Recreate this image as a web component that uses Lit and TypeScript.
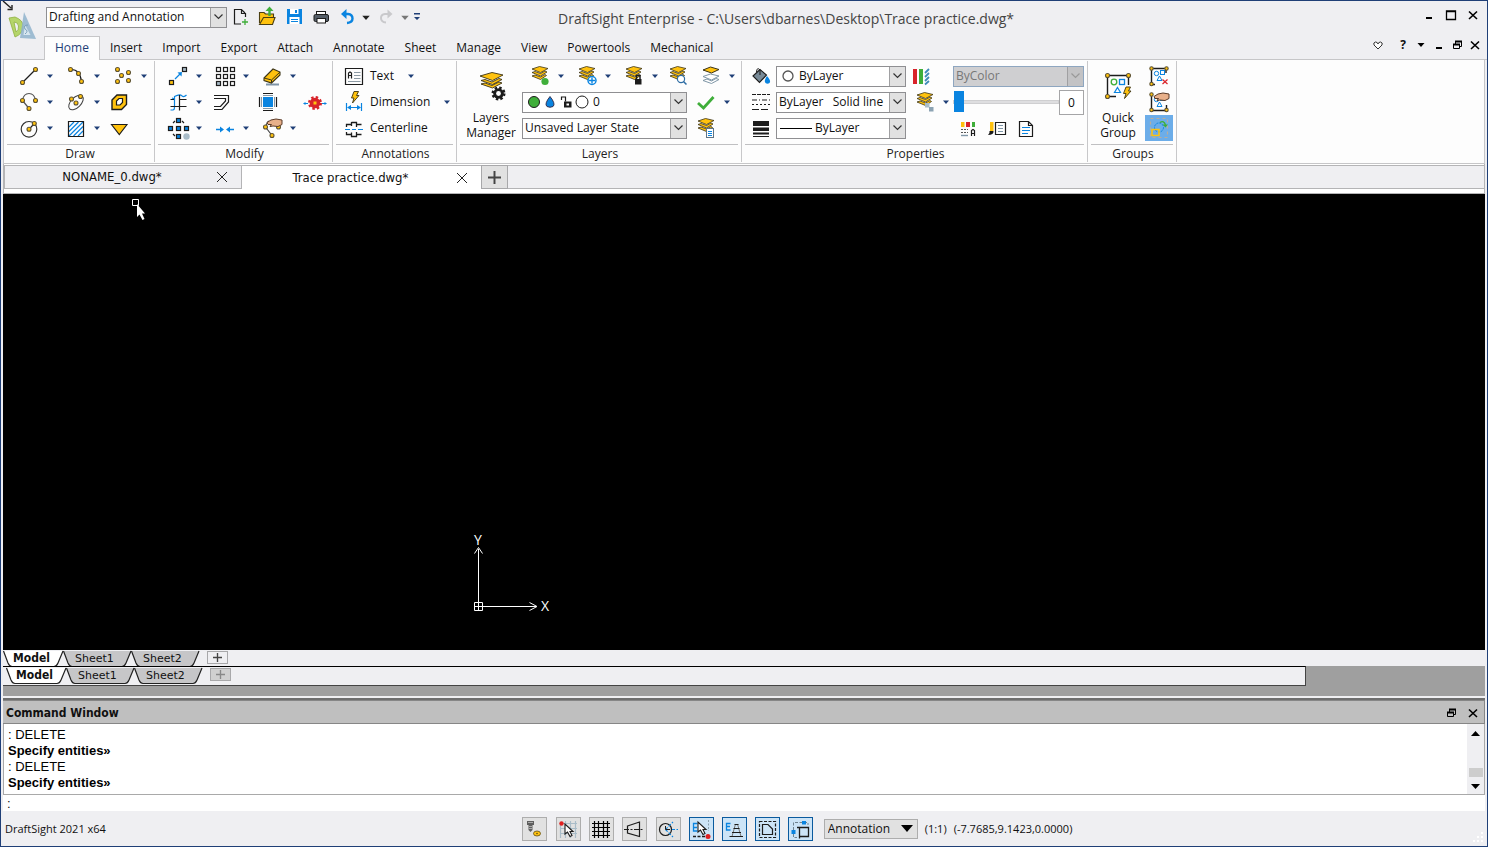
import { LitElement, html, css, svg, nothing } from "lit";
import { customElement } from "lit/decorators.js";
import { classMap } from "lit/directives/class-map.js";

const Y = "#ffc20e";
const K = "#1c1c1c";
const B = "#0a84e0";
const G = "#3fae3a";
const GR = "#a9bcc8";

const dot = (x: number, y: number, r = 2) =>
  svg`<circle cx=${x} cy=${y} r=${r} fill=${Y} stroke="#5e5334" stroke-width="1.1"/>`;
const box = (x: number, y: number, fill = "none", stroke = K, s = 4) =>
  svg`<rect x=${x - s / 2} y=${y - s / 2} width=${s} height=${s} fill=${fill} stroke=${stroke} stroke-width="1.2"/>`;
const stroke = (d: string, c = K, w = 1.2, fill = "none", dash = "") =>
  svg`<path d=${d} fill=${fill} stroke=${c} stroke-width=${w} stroke-dasharray=${dash || "none"}/>`;
const fill = (d: string, c = K) => svg`<path d=${d} fill=${c}/>`;
const stack = () => svg`
  <path d="M4 12 L7 11 L12.500 13 L17 10.500 L18.500 11.500 L12.500 15.500 Z" fill=${Y} stroke="#3a3216" stroke-width="0.8"/>
  <path d="M4 8.500 L7 7.500 L12.500 9.500 L17 7 L19 8 L12.500 12 Z" fill=${Y} stroke="#3a3216" stroke-width="0.8"/>
  <path d="M4 5 L11.500 2.500 L20 4.500 L12.500 8.500 Z" fill=${Y} stroke="#3a3216" stroke-width="0.8"/>`;
const gear = (cx: number, cy: number, r: number, c: string) => svg`
  <circle cx=${cx} cy=${cy} r=${r - 1.2} fill=${c}/>
  <circle cx=${cx} cy=${cy} r=${r - 0.8} fill="none" stroke=${c} stroke-width="2.6"
    stroke-dasharray=${`${(r - 0.8) * 0.42} ${(r - 0.8) * 0.3654}`}/>`;
const hand = (x: number, y: number) => svg`
  <path transform=${`translate(${x} ${y})`} d="M0 3.5 L4 1 L9 0 L15 1 V5.5 L11 7.5 L6 7 L3 7.5 L4.5 5.5 L1 5.5 Z" fill="#e8b08a" stroke="#5b3b28" stroke-width="1"/>`;
const cursor = (x: number, y: number) => svg`
  <path transform=${`translate(${x} ${y})`} d="M0 0 V10 L2.5 8 L5 12.5 L7 11.5 L5 7.5 H8 Z" fill="#fff" stroke=${K} stroke-width="1.1"/>`;
const bolt = (x: number, y: number) => svg`
  <path transform=${`translate(${x} ${y})`} d="M3 0 H7.5 L5.5 4 H8 L1.5 11.5 L3 6.5 H0.5 Z" fill=${Y} stroke="#3c3311" stroke-width="0.9"/>`;
const shapes = () => svg`
  <circle cx="9.5" cy="9.5" r="2.2" fill="none" stroke=${B}/>
  <rect x="13.5" y="6.5" width="4" height="4" fill="none" stroke=${B}/>
  <path d="M12.5 12 L15 16.5 H10 Z" fill="none" stroke=${B}/>`;

const ICONS: Record<string, unknown> = {
  line: [stroke("M5.5 18.5 L18.5 5.5"), dot(5.5, 18.5), dot(18.5, 5.5)],
  arc: [stroke("M6.5 5.5 Q16 5 17.5 17.5"), dot(6.5, 5.5), dot(14.5, 9.5), dot(17.5, 17.5)],
  points: [dot(6.5, 5.5), dot(17.5, 8.5), dot(10.5, 11.5), dot(6.5, 17.5), dot(17.5, 16.5)],
  polyarc: [stroke("M12 18.5 L5.5 10.5 Q6.5 3.5 12 3.5 T18.5 10.5", "#555"), dot(5.5, 10.5), dot(18.5, 10.5), dot(12, 18.5)],
  ellipse: [
    svg`<ellipse cx="12" cy="12.5" rx="9" ry="5" transform="rotate(-45 12 12.5)" fill="none" stroke="#444"/>`,
    dot(7.5, 9), dot(16.5, 6.5), dot(12, 13),
  ],
  region: [
    stroke("M1 10 L6 5 H15.5 V14.5 L10.5 19.5 H1 Z", K, 1.4, Y),
    stroke("M5.5 15 V11 L8 8.5 H11.5 V12.5 L9 15 Z", K, 1.2, "#fff"),
  ],
  circle: [svg`<circle cx="12" cy="13.3" r="7.8" fill="none" stroke="#333" stroke-width="1.2"/>`, stroke("M12 13.3 L17.3 7.5"), dot(12, 13.3), dot(17.3, 7.5)],
  hatch: [
    stroke("M5 11 L10 6 M5 15.5 L14.5 6 M5 20 L19 6 M9.5 20 L19 10.5 M14 20 L19 15", B),
    stroke("M4.5 5.5 H19.5 V20.5 H4.5 Z"),
  ],
  solid: stroke("M0.5 8.5 H16 L8.3 18.5 Z", K, 1.1, Y),
  move: [box(5.5, 18.5, Y), box(18.5, 5.5, GR), stroke("M9 15 L14 10", B), fill("M11.5 8.5 L16 8 L15.5 12.5 Z", B)],
  array: [5.5, 12.5, 19.5].map((y) => [5.5, 12.5, 19.5].map((x) => box(x, y, x < 8 && y > 15 ? GR : "none"))),
  erase: [
    stroke("M6 20.5 H19", "#7f95a8", 2),
    stroke("M4 14 L13 5 L20 8 L20 11 L11.5 19 L4 16.5 Z", "#3d3517", 1.1, Y),
    stroke("M4 14 L11.5 16 L20 8 M11.5 16 V19", "#3d3517", 1),
  ],
  trim: [
    stroke("M4.5 20 H7 Q8.5 20 8.5 17 V9 L6 8 M8.5 12 V6.5 Q14 3.500 16 6 Q18 7.500 20.5 5", B, 1.2),
    stroke("M4.5 9.5 H8 M13 9.5 H20.5 M4.5 16.5 H20.5 M13.5 5 V20.5"),
  ],
  offset: [stroke("M1 5.5 H15.5 V12 L9 19.5 H1"), stroke("M1 8.5 H12.500 V11 L7.5 16.5 H1")],
  scale: [
    svg`<rect x="3" y="7" width="10" height="10" fill=${B}/>`,
    stroke("M3 5.5 H13 M3 18.5 H13 M1.5 7 V17 M14.5 7 V17", "#8698a5", 1),
    stroke("M3 3.5 H13 M3 20.5 H13 M-0.5 7 V17 M16.5 7 V17", K, 1.2),
  ],
  explode: [gear(12, 13, 6.5, "#d8232a"), svg`<rect x="10.5" y="11.5" width="3" height="3" fill=${Y}/>`, stroke("M1 13.5 H5 M19 13.5 H23", B), fill("M0 13.5 L2.500 12 V15 Z M24 13.5 L21.500 12 V15 Z", B)],
  ring: [
    stroke("M7 7 L9 5 M16 5 L18 7 M7 18 L9 20", K),
    [[12.5, 4.5], [4.5, 12.5], [12.5, 12.5], [20.5, 12.5], [12.5, 20.5]].map(([x, y]) => box(x, y, B)),
    svg`<circle cx="20.5" cy="20.5" r="3.2" fill=${GR}/>`,
  ],
  join: [stroke("M3 13.5 H8 M16 13.5 H21", B, 1.4), fill("M7 10.5 L11 13.5 L7 16.5 Z M17 10.5 L13 13.5 L17 16.5 Z", B)],
  editpoly: [stroke("M5.5 11 L12 19.5 M5.5 11 Q7 6 9 5", "#444"), dot(18.5, 11), hand(7, 3), dot(5.5, 11), dot(12, 19.5)],
  text: [
    stroke("M3.5 4.5 H20.5 V20.5 H3.5 Z"),
    stroke("M6.5 14.5 V9 L8 8 L9.5 9 V14.5 M6.5 11.5 H9.5"),
    stroke("M12 8.5 H18.5 M12 11.5 H18.5 M12 14.5 H18.5 M6 17.5 H18.5", "#8c9aa4", 1),
  ],
  dimension: [bolt(9, 1.5), stroke("M4.5 13 V21 M19.5 13 V21 M6 17.5 H18", B), fill("M5 17.5 L9 15 V20 Z M19 17.5 L15 15 V20 Z", B)],
  centerline: [
    stroke("M19.5 8.5 H14 M14.5 11 V6.5 H9.5 M9.5 10 V8.5 H4.5 V11 M9.5 6 V10 M19.5 18.5 H14.5 M14.5 16 V20.5 H9.5 V16.5 M9.5 18.5 H4.5 V16", K, 1.3),
    stroke("M3 13.5 H8 M10 13.5 H14 M16 13.5 H21", B),
  ],
  layerOn: [stack(), svg`<circle cx="17" cy="17.5" r="3.6" fill=${G}/>`],
  layerFreeze: [stack(), svg`<circle cx="17" cy="16.5" r="4" fill="#fff" stroke=${B} stroke-width="1.5"/>`, stroke("M17 13.5 V19.5 M14 16.5 H20", B, 1.4)],
  layerLock: [stack(), svg`<rect x="13" y="15" width="6.5" height="5.5" fill=${K}/>`, stroke("M14.5 15 V11.5 H18 V15", K, 1.5)],
  layerPreview: [stack(), svg`<circle cx="15" cy="15" r="3.6" fill="#fff" stroke="#2e6da4" stroke-width="1.2"/>`, stroke("M17.5 17.5 L20.5 20.5", "#2e6da4", 1.5)],
  layerIsolate: [
    stroke("M4 16.5 L8 15 L12.500 17 L17 14.500 L20 15.5 L12.500 19.5 Z", "#7f96a6", 1, "#fff"),
    stroke("M4 12.500 L11.500 10 L20 12 L12.500 16 Z", "#7f96a6", 1, "#fff"),
    stroke("M4 6 L11.500 3 L20 5.5 L12.500 9 Z", "#3a3216", 1, Y),
  ],
  check: svg`<path d="M4 13 L9.5 18 L19.5 7" fill="none" stroke=${G} stroke-width="2.8"/>`,
  layerState: [stack(), svg`<rect x="12.5" y="12.5" width="7" height="9" fill="#fff" stroke="#5f7486"/>`, stroke("M14 15.5 H18 M14 17.5 H18 M14 19.5 H18", B, 1)],
  paint: [
    stroke("M4 12 L11 5.5 L17.5 11 L10.5 18.5 Z", K, 1.1, "#788a97"),
    stroke("M11 11 V6 Q8 2.5 7.5 8", K, 1),
    fill("M18 12 Q22.5 17 20.5 19 Q18.5 20.5 16.5 19 Q14.5 17 18 12 Z", B),
  ],
  linestyle: [
    stroke("M3 4.5 H21", K, 1.2, "none", "4 1"), stroke("M3 10 H21", K, 1.2, "none", "5 2 1 2"),
    stroke("M3 14.5 H21", K, 1.2, "none", "2 2"), stroke("M3 19.5 H21", K, 1.2, "none", "7 2"),
  ],
  lineweight: svg`<rect x="4" y="5" width="16" height="5" fill=${K}/><rect x="4" y="11.5" width="16" height="3.5" fill=${K}/><rect x="4" y="16.5" width="16" height="2" fill=${K}/><rect x="4" y="20" width="16" height="1" fill=${K}/>`,
  colors: svg`<rect x="0" y="5" width="4" height="15" fill="#d8232a"/><rect x="6" y="5" width="4" height="15" fill=${G}/><path d="M12 9 L16 5 M12 13 L16 9 M12 17 L16 13 M12 20.5 L16 17" stroke="#3f8ab8" stroke-width="1.8"/>`,
  layerCopy: [stack(), svg`<rect x="12" y="13" width="4.5" height="4.5" fill=${GR}/><rect x="16" y="17" width="4.5" height="4.5" fill="#8ca3b3"/>`],
  palette: [
    svg`<rect x="5" y="6" width="3.5" height="5" fill=${Y}/><rect x="10" y="6" width="4" height="5" fill="#d8232a"/><rect x="16" y="6" width="3" height="5" fill=${G}/>`,
    stroke("M5 13.5 H12 M5 16.5 H12", "#555", 1, "none", "2 1"), stroke("M5 19.5 H12", "#7f96a6", 1.4),
    stroke("M15.5 20 V14.5 L17 13.5 L18.5 14.5 V20 M15.5 17.5 H18.5"),
  ],
  brush: [
    stroke("M10.5 6.5 H20.5 V18.5 H10.5 Z", K, 1.2, "#fff"), stroke("M13 9.5 H18 M13 12.5 H18 M13 15.5 H18", "#7f96a6", 1),
    svg`<rect x="5" y="6" width="3.5" height="9" fill=${Y}/>`, fill("M4.5 15 H8.5 Q9 19 3 19 Q5 17.5 4.5 15 Z"),
  ],
  sheet: [stroke("M5.5 5.5 H14.5 L18.5 9.5 V20.5 H5.5 Z M14.5 5.5 V9.5 H18.5"), stroke("M8 11.5 H16 M8 14.5 H16 M8 17.5 H14", B)],
  groupRemove: [
    stroke("M4.5 20 V4.5 H19 V9 M8 20.5 H4.5", K, 1.4), shapes(), dot(4.5, 4.5, 1.7), dot(19.5, 4.5, 1.7), dot(4.5, 20, 1.7),
    stroke("M15.5 15.5 L20.5 20 M20.5 15.5 L15.5 20", "#d8232a"),
  ],
  groupEdit: [
    stroke("M4.5 5 V20.5 H19.5 V15", K, 1.4), shapes(), hand(7, 3), dot(4.5, 4.5, 1.7), dot(4.5, 20, 1.7), dot(19.5, 20, 1.7),
  ],
  groupSelect: [
    stroke("M3.5 2.5 H20.5 V21.5 H3.5 Z", "#b8ad9d", 1.2, "none", "3 3"),
    svg`<circle cx="12" cy="11.5" r="4.5" fill="none" stroke=${B} stroke-dasharray="2 1"/>`,
    stroke("M5 13.5 H12 V19.5 H5 Z", Y, 1.6), stroke("M13 6.500 Q17 4 18.5 9", G, 1.4), fill("M15.500 8.500 H21 L18.500 11.500 Z", G),
  ],
  newdoc: [stroke("M6.5 4.5 H13.5 L17 8 M13.5 4.5 V8.5 H17.5 V12 M6.5 4 V19 H13"), stroke("M17 14 V20 M14 17 H20", G, 1.3)],
  open: [
    stroke("M4.5 18 V7.5 H9 L10.5 9 H18.5 V12", "#4b3f12", 1.1, Y), stroke("M4.5 19.5 L8.5 12.5 H20 L17.5 19.5 Z", "#4b3f12", 1.1, Y),
    stroke("M14.5 11 V5", G, 2.4), fill("M10.5 6 L14.5 1.5 L18.5 6 Z", G),
  ],
  save: [
    svg`<rect x="5" y="4" width="15" height="15" fill=${B}/><rect x="8" y="4" width="8.500" height="5" fill="#fff"/><rect x="13" y="5" width="2" height="3" fill=${B}/><rect x="7.500" y="12" width="10" height="7" fill="#fff"/>`,
    stroke("M9 14.5 H16 M9 16.5 H16", B, 1),
  ],
  print: [
    svg`<rect x="7.500" y="6.500" width="9" height="4" fill="#fff" stroke=${K}/><rect x="5" y="9.500" width="14.500" height="7" rx="1.500" fill="#555e68" stroke=${K}/><rect x="8" y="13.500" width="8.500" height="4.500" fill="#fff" stroke=${K}/>`,
  ],
  undo: [stroke("M8 9 H12 Q16.5 9.500 16.5 13.500 Q16.5 17.5 11 18", B, 2.4), fill("M5 9 L10.5 4 V14 Z", B)],
  redo: [stroke("M14 9 H10 Q6 9.500 6 13 Q6 17 11 17.5", "#c9c9cc", 2), fill("M17.5 9 L12.5 4.5 V13.500 Z", "#c9c9cc")],
  screw: [
    fill("M5 4 H12 V8 H10.500 V13 L8.500 15 L6.500 13 V8 H5 Z", "#5e5e5e"), stroke("M6 5.500 H11 M7 9.500 H10 M7 11.500 H10", "#a9a9a9", 1),
    svg`<ellipse cx="15" cy="16.500" rx="3.500" ry="2.500" fill=${Y} stroke="#5e4b12" stroke-width="0.800"/><circle cx="15" cy="16.500" r="0.800" fill="#5e4b12"/>`,
  ],
  snap: [stroke("M4.5 6 V21 M9.5 4 V21 M14.5 4 V21 M19.5 4 V21 M4 6.5 H21 M4 11.5 H21 M4 16.5 H21", GR, 1.2), svg`<circle cx="5.500" cy="6.500" r="2.200" fill="#e02020"/>`, cursor(9, 7)],
  grid: stroke("M5.5 4 V21 M9.500 4 V21 M14.500 4 V21 M18.500 4 V21 M3 6.5 H21 M3 10.5 H21 M3 14.500 H21 M3 18.500 H21", "#000", 1.2),
  ortho: [stroke("M5.500 9 L17.500 5 V19.500 L5.500 16 Z"), stroke("M2 12.500 H22", K, 1.2, "none", "5 1.500 2 1.500")],
  polar: [svg`<circle cx="9.500" cy="12.500" r="6" fill="none" stroke=${K} stroke-width="1.200"/>`, stroke("M9.500 12.500 L17 5 M9.500 12.500 L17 20 M16 12.500 H22", B, 1.1, "none", "3 1.500"), stroke("M9.500 9 V12.500 H14", K, 1)],
  esnap: [
    stroke("M8.500 6.500 H4.500 V14 H8.500 M4.500 10.500 H8", B, 1.3), stroke("M19.500 3 V14", "#8aa0ae", 1, "none", "2 1.500"),
    stroke("M4 19.500 H16", K, 1.3, "none", "3 1.500"), cursor(9, 5), svg`<circle cx="19" cy="19.500" r="2.500" fill="#e02020"/>`,
  ],
  etrack: [stroke("M8.500 6.500 H4.500 V13 H8.500 M4.500 9.500 H8", B, 1.3), stroke("M13.500 7 L10 19.500 M15.500 7 L19 19.500", "#777", 1), stroke("M12.500 7.500 H16.500 M11.500 11.500 H17.500 M10 15.500 H19 M7.500 19.500 H21", K, 1.2)],
  qinput: [stroke("M4.500 4.500 H20.500 V20.500 H4.500 Z", K, 1.2, "none", "3 1.500"), stroke("M7.500 7.500 H13 L17.500 12 V17.500 H7.500 Z")],
  transform: [
    stroke("M5.500 13 V5.500 H20 V8 M5.500 17 V20.500 H9", "#6e8290", 1, "none", "3 1.500"), stroke("M11.500 10.500 H20.500 V19.500 H11.500 Z M11.500 10.500 V21.500 M9 10.500 H20", K, 1.3),
    svg`<rect x="14" y="4" width="4" height="3.500" fill=${B}/><rect x="3.500" y="13" width="4" height="4" fill=${B}/>`,
  ],
};

const icon = (name: string) =>
  html`<svg class="icon" viewBox="0 0 24 24" aria-hidden="true">${ICONS[name]}</svg>`;
const more = (label: string, cls = "") =>
  html`<button class="more ${cls}" aria-label="${label} options"><svg width="6" height="4" viewBox="0 0 6 4"><path d="M0 0.500 H6 L3 4 Z"/></svg></button>`;
const tool = (name: string, label: string, drop = false, cls = "") =>
  html`<span class="tool"><button class="ib" aria-label=${label}>${icon(name)}</button>${drop ? more(label, cls) : nothing}</span>`;
const chevron = html`<span class="chev"><svg width="9" height="6" viewBox="0 0 9 6"><path d="M0.500 0.500 L4.500 4.500 L8.500 0.500" fill="none" stroke="currentColor" stroke-width="1.200"/></svg></span>`;
const combo = (label: string, value: string, cls = "", art: unknown = nothing, disabled = false) =>
  html`<span class="combo ${cls}"><select aria-label=${label} ?disabled=${disabled}><option>${value}</option></select>${art}${chevron}</span>`;
const glyph = (label: string, w: number, d: unknown) =>
  html`<button class="glyph" aria-label=${label}><svg width=${w} height="12" viewBox="0 0 ${w} 12">${d}</svg></button>`;
const closeGlyph = svg`<path d="M2 2.500 L10 10 M10 2.500 L2 10" stroke="#000" stroke-width="1.600"/>`;
const restoreGlyph = svg`<path d="M2.500 5.500 H8.500 V9.500 H2.500 Z M4.500 5 V2.500 H10.500 V7.500 H9" fill="none" stroke="#000"/><path d="M2 5.500 H9 M4 2.500 H11" stroke="#000" stroke-width="2"/>`;
const crossGlyph = html`<svg width="12" height="12" viewBox="0 0 12 12"><path d="M1 1 L11 11 M11 1 L1 11" stroke="#222"/></svg>`;

const MENUS = ["Home", "Insert", "Import", "Export", "Attach", "Annotate", "Sheet", "Manage", "View", "Powertools", "Mechanical"];
const SHEETS = ["Model", "Sheet1", "Sheet2"];
const STATUS: [string, string, boolean][][] = [
  [["screw", "Hardware", false]],
  [["snap", "Snap", false], ["grid", "Grid", false], ["ortho", "Ortho", false]],
  [["polar", "Polar", false], ["esnap", "ESnap", true], ["etrack", "ETrack", true], ["qinput", "QInput", true], ["transform", "Transform", true]],
];

@customElement("app-root")
export class AppRoot extends LitElement {
  static styles = css`
    :host {
      display: flex;
      flex-direction: column;
      box-sizing: border-box;
      height: 100vh;
      min-height: 500px;
      padding: 0 2px;
      overflow: hidden;
      border: 1px solid #1f3f77;
      background: #efeff2;
      color: #111;
      font: 12px/16px "Open Sans", "Noto Sans", sans-serif;
    }
    * { box-sizing: border-box; }
    button, select, input { font: inherit; color: inherit; margin: 0; padding: 0; border: 0; background: none; border-radius: 0; }
    button { display: inline-flex; align-items: center; justify-content: center; flex: none; white-space: nowrap; }
    svg { display: block; flex: none; overflow: visible; }
    .icon { width: 24px; height: 24px; }

    .header { flex: none; display: grid; grid-template-columns: 41px 1fr; grid-template-rows: 34px 24px; border-bottom: 1px solid #c6c6c8; margin: 0 -2px 0 0; }
    .logo { grid-row: 1 / 3; align-self: start; }
    .titlebar { display: flex; align-items: center; padding: 0 3px 2px 2px; min-width: 0; }
    .workspace { width: 181px; margin-right: 1px; }
    .qat { display: flex; gap: 3px; align-items: center; }
    .qat .more { width: 12px; }
    .qat .more svg { width: 8px; height: 5px; fill: #222; }
    .qat .dim svg { fill: #777; }
    .title { flex: 1; padding: 4px 0 0 138px; color: #444; font-size: 14px; line-height: 20px; white-space: nowrap; overflow: hidden; }
    .wins { display: flex; margin-top: -4px; }
    .wins .glyph { width: 22px; height: 24px; }
    .menubar { display: flex; align-items: flex-end; min-width: 0; padding-right: 3px; }
    .menu { display: flex; flex: 1; }
    .menu button { height: 24px; padding: 0 9px 2px; margin-bottom: -1px; border: 1px solid transparent; border-bottom: 0; }
    .menu .on { padding: 0 10px 2px; background: #fdfdfd; border-color: #c6c6c8; color: #1f3f77; }
    .doc { display: flex; padding-bottom: 2px; }
    .doc .glyph { width: 18px; height: 24px; }
    .doc .fav { margin-right: 7px; }

    .ribbon { flex: none; display: flex; background: #fdfdfd; border: 1px solid #c6c6c8; border-top: 0; }
    .group { display: flex; flex-direction: column; flex: none; margin: 1px 0; border-right: 1px solid #c8c8ca; }
    .body { flex: 1; display: flex; padding-top: 2px; margin-bottom: 3px; }
    .caption { margin: 0 3px; padding-left: 2px; border-top: 1px solid #c0c0c2; text-align: center; line-height: 17px; color: #222; }
    .rows { display: grid; grid-auto-rows: 26px; align-items: center; }
    .draw { width: 151px; }
    .draw .rows { padding-left: 13px; grid-template-columns: repeat(3, 47px); }
    .modify { width: 178px; }
    .modify .rows { padding-left: 11px; grid-template-columns: 47px 47px 43px 24px; }
    .annot { width: 124px; }
    .annot .rows { padding-left: 9px; }
    .layers { width: 285px; }
    .props { width: 346px; }
    .props .rows { padding-left: 7px; grid-template-columns: 27px 137px 40px 131px; }
    .groups { width: 89px; }
    .groups .rows { grid-template-columns: 28px; justify-items: center; }
    .groups .ib { width: 28px; height: 26px; }
    .groups .on { background: #6cade9; }
    .tool { display: flex; align-items: center; }
    .ib { height: 24px; }
    .more { width: 18px; height: 24px; }
    .more svg { fill: #1f3f77; }
    .named { gap: 4px; }
    .annot .more { margin-left: 8px; }
    .big { flex-direction: column; justify-content: flex-start; padding-top: 7px; gap: 8px; line-height: 15px; white-space: normal; width: 56px; margin-left: 6px; }
    .groups .big { width: 52px; margin-left: 4px; margin-right: 1px; }
    .stackrows { margin-left: 3px; }
    .strip { display: grid; grid-template-columns: 47px 47px 44px 33px 42px; padding-left: 6px; }
    .line { display: flex; align-items: center; gap: 7px; }
    .icons { display: flex; gap: 5px; padding-left: 3px; }
    .combo { display: grid; height: 21px; border: 1px solid #8f8f92; background: #fff; grid-template-columns: 1fr 16px; align-items: center; }
    .combo select { grid-area: 1 / 1 / 2 / 3; width: 100%; height: 19px; appearance: none; padding: 0 16px 0 2px; opacity: 1; }
    .combo .art { grid-area: 1 / 1; pointer-events: none; }
    .chev { grid-area: 1 / 2; height: 19px; display: flex; align-items: center; justify-content: center; pointer-events: none; background: #e1e1e1; border-left: 1px solid #a0a0a2; color: #333; }
    .w164 { width: 165px; }
    .w129 { width: 130px; }
    .in70 select { padding-left: 70px; }
    .in22 select { padding-left: 22px; }
    .in38 select { padding-left: 38px; }
    .off { background: #cfcfd1; color: #777; border-color: #8ea6c0; width: 131px; }
    .off select { color: #777; }
    .off .chev { background: #c3c3c5; color: #999; }
    .slide { display: flex; align-items: center; }
    .slide input[type="range"] { appearance: none; width: 106px; height: 22px; }
    .slide input[type="range"]::-webkit-slider-runnable-track { height: 4px; background: #dedee0; border: 1px solid #cfcfd1; }
    .slide input[type="range"]::-webkit-slider-thumb { appearance: none; width: 10px; height: 21px; margin-top: -10px; background: #0a84e0; }
    .num { width: 25px; height: 25px; border: 1px solid #a5a5a7; background: #fff; text-align: center; }

    .docs { flex: none; display: flex; height: 30px; padding-top: 1px; background: #fff; border: 1px solid #b4b4b6; border-top: 0; font: 13px/16px "DejaVu Sans Condensed", "DejaVu Sans", sans-serif; }
    .dtab { display: flex; align-items: center; height: 24px; width: 239px; border-top: 1px solid #b4b4b6; }
    .dtab .name { flex: 1; padding-left: 16px; }
    .dtab .x { width: 38px; }
    .idle { width: 238px; background: #efeff2; border: 1px solid #b4b4b6; }
    .plus { width: 27px; height: 24px; background: #e1e1e1; border: 1px solid #a8a8aa; }
    .fill { flex: 1; height: 24px; background: #efeff2; border: 1px solid #b4b4b6; border-width: 1px 0; }

    .canvas { flex: 1; min-height: 0; position: relative; background: #000; }
    .pick { position: absolute; left: 128px; top: 4px; }
    .ucs { position: absolute; left: 465px; bottom: 33px; }
    .ucs text { fill: #fff; font: 14px "Open Sans", sans-serif; }

    .sheets { flex: none; display: flex; height: 16px; font: 11px/17px "DejaVu Sans", sans-serif; }
    .stab { display: grid; grid-template-columns: 100%; justify-content: start; justify-items: start; text-align: left; height: 16px; width: 68px; }
    .stab > * { grid-area: 1 / 1; }
    .stab span { padding-left: 12px; }
    .stab .sel { font-family: "DejaVu Sans Condensed", sans-serif; font-weight: bold; font-size: 12px; padding-left: 10px; }
    .stab svg { width: 100%; height: 16px; }
    .stab.first { width: 60px; }
    .splus { width: 21px; height: 13px; margin: 1px 0 0 8px; border: 1px solid #a8a8aa; background: #efeff2; }
    .ghost .splus { background: #d0d0d0; color: #888; }
    .dock { flex: none; height: 30px; background: #9f9f9f; }
    .ghost { height: 20px; margin-right: 179px; padding-left: 3px; background: #efeff2; border: 1px solid #444; border-top-color: #000; border-left: 0; }

    .cmd { flex: none; margin-top: 2px; border-top: 2px solid #6e6e6e; }
    .cmdbar { display: flex; align-items: center; height: 24px; padding: 1px 0 0 3px; background: #bfbfbf; border: 1px solid #868686; border-left: 0; font: bold 12px/16px "DejaVu Sans Condensed", "DejaVu Sans", sans-serif; }
    .cmdbar .label { flex: 1; }
    .cmdbar .glyph { width: 22px; }
    .log { display: flex; height: 71px; border: 1px solid #a9a9a9; border-top: 0; background: #fff; font: 13px/16px "Liberation Sans", sans-serif; color: #000; }
    .lines { flex: 1; padding: 3px 4px 0; overflow: hidden; }
    .lines p { margin: 0; }
    .lines .b { font-weight: bold; }
    .scroll { width: 17px; background: #efeff2; display: flex; flex-direction: column; align-items: center; padding: 7px 0 5px; }
    .scroll .thumb { width: 14px; height: 9px; margin-top: auto; margin-bottom: 7px; background: #cdcdcd; }
    .entry { flex: none; width: 100%; height: 16px; padding: 1px 4px 0; background: #fff; font: 13px/15px "Liberation Sans", sans-serif; }

    .status { flex: none; display: flex; align-items: center; height: 35px; font-size: 11px; }
    .version { flex: 0 0 35%; padding-left: 2px; }
    .toggles { display: flex; gap: 9px; margin-right: 11px; }
    .set { display: flex; gap: 8px; }
    .toggle { width: 25px; height: 24px; border: 1px solid #adadad; background: #e1e1e1; }
    .toggle.on { border-color: #0a5a9e; background: #cce4f7; }
    .scale { display: grid; width: 94px; height: 20px; border: 1px solid #adadad; background: #e1e1e1; align-items: center; }
    .scale > * { grid-area: 1 / 1; }
    .scale select { appearance: none; width: 100%; height: 18px; padding-left: 3px; font-size: 12px; }
    .scale svg { justify-self: end; margin-right: 4px; pointer-events: none; }
    .status p { margin: 0 0 0 7px; }
    .grip { margin-left: auto; align-self: flex-end; margin-bottom: 3px; }
  `;

  private sheetTabs() {
    return SHEETS.map((name, i) => {
      const w = i ? 68 : 60;
      const shade = i ? "#c6c6c8" : "#fff";
      return html`<button class=${classMap({ stab: true, first: !i })}>
        <svg viewBox="0 0 ${w} 16"><path d="M0.500 0 L5 12 Q6.500 15.500 9 15.500 H${w - 9} Q${w - 6.5} 15.500 ${w - 5} 12 L${w} 0" fill=${shade} stroke="#222" stroke-width="1.200"/></svg>
        <span class=${i ? "" : "sel"}>${name}</span>
      </button>`;
    });
  }

  private plusGlyph(c: string, s: number) {
    return html`<svg width=${s} height=${s} viewBox="0 0 12 12"><path d="M6 0 V12 M0 6 H12" stroke=${c} stroke-width="1.800"/></svg>`;
  }

  render() {
    return html`
      <header class="header">
        <svg class="logo" width="38" height="46" viewBox="0 0 38 46" aria-label="DraftSight">
          <path d="M0 0 L8 7 M4.500 8.500 H9 V4" fill="none" stroke="#222" stroke-width="1.400"/>
          <path d="M6 17 L12 16 Q20 19 20 25 Q20 33 12 36 Z M11 21 L13 31 Q16 29 15.500 25 Q15 21 11 21 Z" fill="#b5d56a" stroke="#8fb040" stroke-width="0.800" fill-rule="evenodd"/>
          <path d="M21 11 L33 38 L17 37 Z" fill="#8fb3cc" opacity="0.850"/>
          <path d="M22 24 L27.500 34 L20.500 34 Z" fill="#d7e6ef"/>
          <path d="M25 24 Q20 24 22 28 Q26 30 22 33" fill="none" stroke="#7aa0bb"/>
        </svg>
        <div class="titlebar">
          ${combo("Workspace", "Drafting and Annotation", "workspace")}
          <div class="qat">
            ${tool("newdoc", "New")}${tool("open", "Open")}${tool("save", "Save")}${tool("print", "Print")}
            ${tool("undo", "Undo", true)}${tool("redo", "Redo", true, "dim")}
            <button class="glyph" aria-label="Customize"><svg width="6" height="8" viewBox="0 0 6 8" fill="#1f3f77"><path d="M0 0 H6 V1.500 H0 Z M0 4 H6 L3 7 Z"/></svg></button>
          </div>
          <div class="title">DraftSight Enterprise - C:\\Users\\dbarnes\\Desktop\\Trace practice.dwg*</div>
          <div class="wins">
            ${glyph("Minimize", 12, svg`<path d="M3 9 H9" stroke="#000" stroke-width="2"/>`)}
            ${glyph("Maximize", 12, svg`<path d="M1.500 2 H10.500 V10.500 H1.500 Z M1 2.500 H11" fill="none" stroke="#000" stroke-width="1.300"/>`)}
            ${glyph("Close", 12, closeGlyph)}
          </div>
        </div>
        <div class="menubar">
          <nav class="menu">${MENUS.map((m, i) => html`<button class=${i ? "" : "on"}>${m}</button>`)}</nav>
          <div class="doc">
            <button class="glyph fav" aria-label="Favorites"><svg width="10" height="9" viewBox="0 0 10 9"><path d="M5 8 L1 4 Q0 1.500 2.500 1 Q4.500 1 5 3 Q5.500 1 7.500 1 Q10 1.500 9 4 Z" fill="#fff" stroke="#333"/></svg></button>
            <button class="glyph" aria-label="Help"><b>?</b></button>
            ${glyph("Help options", 8, svg`<path d="M0.500 4 H7.500 L4 8 Z"/>`)}
            ${glyph("Minimize drawing", 12, svg`<path d="M3 9 H9" stroke="#000" stroke-width="2"/>`)}
            ${glyph("Restore drawing", 12, restoreGlyph)}
            ${glyph("Close drawing", 12, closeGlyph)}
          </div>
        </div>
      </header>

      <section class="ribbon">
        <div class="group draw">
          <div class="body"><div class="rows">
            ${tool("line", "Line", true)}${tool("arc", "Arc", true)}${tool("points", "Point", true)}
            ${tool("polyarc", "Polyline", true)}${tool("ellipse", "Ellipse", true)}${tool("region", "Region")}
            ${tool("circle", "Circle", true)}${tool("hatch", "Hatch", true)}${tool("solid", "Solid")}
          </div></div>
          <div class="caption">Draw</div>
        </div>
        <div class="group modify">
          <div class="body"><div class="rows">
            ${tool("move", "Move", true)}${tool("array", "Pattern", true)}${tool("erase", "Delete", true)}<span></span>
            ${tool("trim", "Trim", true)}${tool("offset", "Offset")}${tool("scale", "Scale")}${tool("explode", "Explode")}
            ${tool("ring", "Circular pattern", true)}${tool("join", "Join", true)}${tool("editpoly", "Edit polyline", true)}<span></span>
          </div></div>
          <div class="caption">Modify</div>
        </div>
        <div class="group annot">
          <div class="body"><div class="rows">
            <span class="tool"><button class="named">${icon("text")}Text</button>${more("Text")}</span>
            <span class="tool"><button class="named">${icon("dimension")}Dimension</button>${more("Dimension")}</span>
            <span class="tool"><button class="named">${icon("centerline")}Centerline</button></span>
          </div></div>
          <div class="caption">Annotations</div>
        </div>
        <div class="group layers">
          <div class="body">
            <button class="big">
              <svg width="32" height="32" viewBox="0 0 32 32">
                <path d="M6 14 L10 13 L17 15.500 L24 12 L27 13 L17.500 18 Z" fill=${Y} stroke="#3a3216" stroke-width="0.900"/>
                <path d="M6 10.500 L10 9.500 L17 12 L24 8.500 L27 9.500 L17.500 14.500 Z" fill=${Y} stroke="#3a3216" stroke-width="0.900"/>
                <path d="M5 6 L17 2.500 L28 5 L17.500 10.500 Z" fill=${Y} stroke="#3a3216" stroke-width="0.900"/>
                ${gear(23.5, 23.5, 6.5, K)}<circle cx="23.500" cy="23.500" r="2.400" fill="#fdfdfd"/>
              </svg>
              <span>Layers<br />Manager</span>
            </button>
            <div class="rows stackrows">
              <div class="strip">
                ${tool("layerOn", "Show layer", true)}${tool("layerFreeze", "Freeze layer", true)}${tool("layerLock", "Lock layer", true)}${tool("layerPreview", "Layer preview")}${tool("layerIsolate", "Isolate layer", true)}
              </div>
              <div class="line">
                ${combo("Active layer", "0", "w164 in70", html`<svg class="art" width="66" height="14" viewBox="0 0 66 14">
                  <circle cx="11" cy="7" r="5.500" fill=${G} stroke=${K}/>
                  <path d="M27 1.500 Q33 9 30 11.500 Q27 13 24 11.500 Q21 9 27 1.500 Z" fill=${B} stroke="#335"/>
                  <rect x="41" y="6.500" width="7.500" height="6" fill=${K}/><rect x="43.500" y="8.500" width="2.500" height="2" fill="#fff"/>
                  <path d="M38.500 5 V2 H42.500 V6.500" fill="none" stroke=${K} stroke-width="1.200"/>
                  <circle cx="59" cy="7" r="6" fill="#fff" stroke=${K}/>
                </svg>`)}
                ${tool("check", "Activate", true)}
              </div>
              <div class="line">${combo("Layer state", "Unsaved Layer State", "w164")}${tool("layerState", "Layer states")}</div>
            </div>
          </div>
          <div class="caption">Layers</div>
        </div>
        <div class="group props">
          <div class="body"><div class="rows">
            ${tool("paint", "Color")}
            ${combo("Line color", "ByLayer", "w129 in22", html`<svg class="art" width="22" height="14" viewBox="0 0 22 14"><circle cx="11" cy="7" r="5" fill="#fff" stroke="#555" stroke-width="1.300"/></svg>`)}
            ${tool("colors", "Color books")}
            ${combo("Print style", "ByColor", "off", nothing, true)}
            ${tool("linestyle", "Line style")}
            ${combo("Line style value", "ByLayer\u00a0\u00a0\u00a0Solid line", "w129")}
            ${tool("layerCopy", "Match layer", true)}
            <span class="slide"><input type="range" aria-label="Transparency" min="0" max="90" value="0" /><input class="num" aria-label="Transparency value" value="0" /></span>
            ${tool("lineweight", "Line weight")}
            ${combo("Line weight value", "ByLayer", "w129 in38", html`<svg class="art" width="36" height="14" viewBox="0 0 36 14"><path d="M3 7.500 H35" stroke="#000"/></svg>`)}
            <span></span>
            <span class="icons">${tool("palette", "Property painter")}${tool("brush", "Format painter")}${tool("sheet", "Properties list")}</span>
          </div></div>
          <div class="caption">Properties</div>
        </div>
        <div class="group groups">
          <div class="body">
            <button class="big">
              <svg width="32" height="32" viewBox="0 0 32 32">
                <path d="M5.500 26.500 V5.500 H26.500 V15 M5.500 26.500 H14" fill="none" stroke=${K} stroke-width="1.400"/>
                <circle cx="12" cy="12" r="2.800" fill="none" stroke=${G} stroke-width="1.300"/>
                <rect x="17.500" y="9.500" width="5" height="5" fill="none" stroke=${B} stroke-width="1.300"/>
                <path d="M15.500 17.500 L18.500 22.500 H12.500 Z" fill="none" stroke=${B} stroke-width="1.200"/>
                ${dot(5.5, 5.5)}${dot(26.5, 5.5)}${dot(5.5, 26.5)}${bolt(21, 17)}
              </svg>
              <span>Quick<br />Group</span>
            </button>
            <div class="rows">
              <button class="ib" aria-label="Ungroup">${icon("groupRemove")}</button>
              <button class="ib" aria-label="Edit group">${icon("groupEdit")}</button>
              <button class="ib on" aria-label="Group selection">${icon("groupSelect")}</button>
            </div>
          </div>
          <div class="caption">Groups</div>
        </div>
      </section>

      <div class="docs">
        <div class="dtab idle"><button class="name">NONAME_0.dwg*</button><button class="x" aria-label="Close NONAME_0">${crossGlyph}</button></div>
        <div class="dtab"><button class="name">Trace practice.dwg*</button><button class="x" aria-label="Close Trace practice">${crossGlyph}</button></div>
        <button class="plus" aria-label="New drawing">${this.plusGlyph("#444", 13)}</button>
        <div class="fill"></div>
      </div>

      <main class="canvas">
        <svg class="pick" width="16" height="24" viewBox="0 0 16 24">
          <path d="M1.500 1.500 H7.500 V7.500 H1.500 Z" fill="none" stroke="#fff"/>
          <path d="M6 6 V19 L8.500 16.500 L11.500 22 L13.500 21 L11 15.500 H14 Z" fill="#fff"/>
        </svg>
        <svg class="ucs" width="90" height="86" viewBox="0 0 90 86">
          <path d="M10.500 75 V15 M10.500 76 V68 M10.500 72.500 H68 M6.500 19.500 L10.500 13.500 L14.500 19.500 M61.500 68.500 L69 72.500 L61.500 76.500 M6.500 68.500 H14.500 V76.500 H6.500 Z M6.500 72.500 H10" transform="translate(0 3)" fill="none" stroke="#fff"/>
          <text x="6" y="14">Y</text><text x="73" y="80">X</text>
        </svg>
      </main>

      <div class="sheets">${this.sheetTabs()}<button class="splus" aria-label="Add sheet">${this.plusGlyph("#444", 9)}</button></div>
      <div class="dock"><div class="sheets ghost">${this.sheetTabs()}<button class="splus" aria-label="Add sheet">${this.plusGlyph("#888", 9)}</button></div></div>

      <section class="cmd">
        <div class="cmdbar"><span class="label">Command Window</span>${glyph("Restore", 12, restoreGlyph)}${glyph("Close", 12, closeGlyph)}</div>
        <div class="log">
          <div class="lines"><p>: DELETE</p><p class="b">Specify entities»</p><p>: DELETE</p><p class="b">Specify entities»</p></div>
          <div class="scroll">
            <svg width="9" height="5" viewBox="0 0 9 5"><path d="M0 5 L4.500 0 L9 5 Z"/></svg>
            <span class="thumb"></span>
            <svg width="9" height="5" viewBox="0 0 9 5"><path d="M0 0 L4.500 5 L9 0 Z"/></svg>
          </div>
        </div>
      </section>
      <input class="entry" aria-label="Command" value=":" />

      <footer class="status">
        <span class="version">DraftSight 2021 x64</span>
        <div class="toggles">
          ${STATUS.map((set) => html`<div class="set">${set.map(([i, l, on]) => html`<button class=${classMap({ toggle: true, on })} aria-label=${l} aria-pressed=${on}>${icon(i)}</button>`)}</div>`)}
        </div>
        <span class="scale"><select aria-label="Annotation scale"><option>Annotation</option></select><svg width="12" height="7" viewBox="0 0 12 7"><path d="M0 0 H12 L6 7 Z"/></svg></span>
        <p>(1:1)</p>
        <p>(-7.7685,9.1423,0.0000)</p>
        <svg class="grip" width="12" height="11" viewBox="0 0 12 11" fill="#fff"><path d="M8 0 H10 V2 H8 Z M4 4 H6 V6 H4 Z M8 4 H10 V6 H8 Z M0 8 H2 V10 H0 Z M4 8 H6 V10 H4 Z M8 8 H10 V10 H8 Z"/></svg>
      </footer>
    `;
  }
}
